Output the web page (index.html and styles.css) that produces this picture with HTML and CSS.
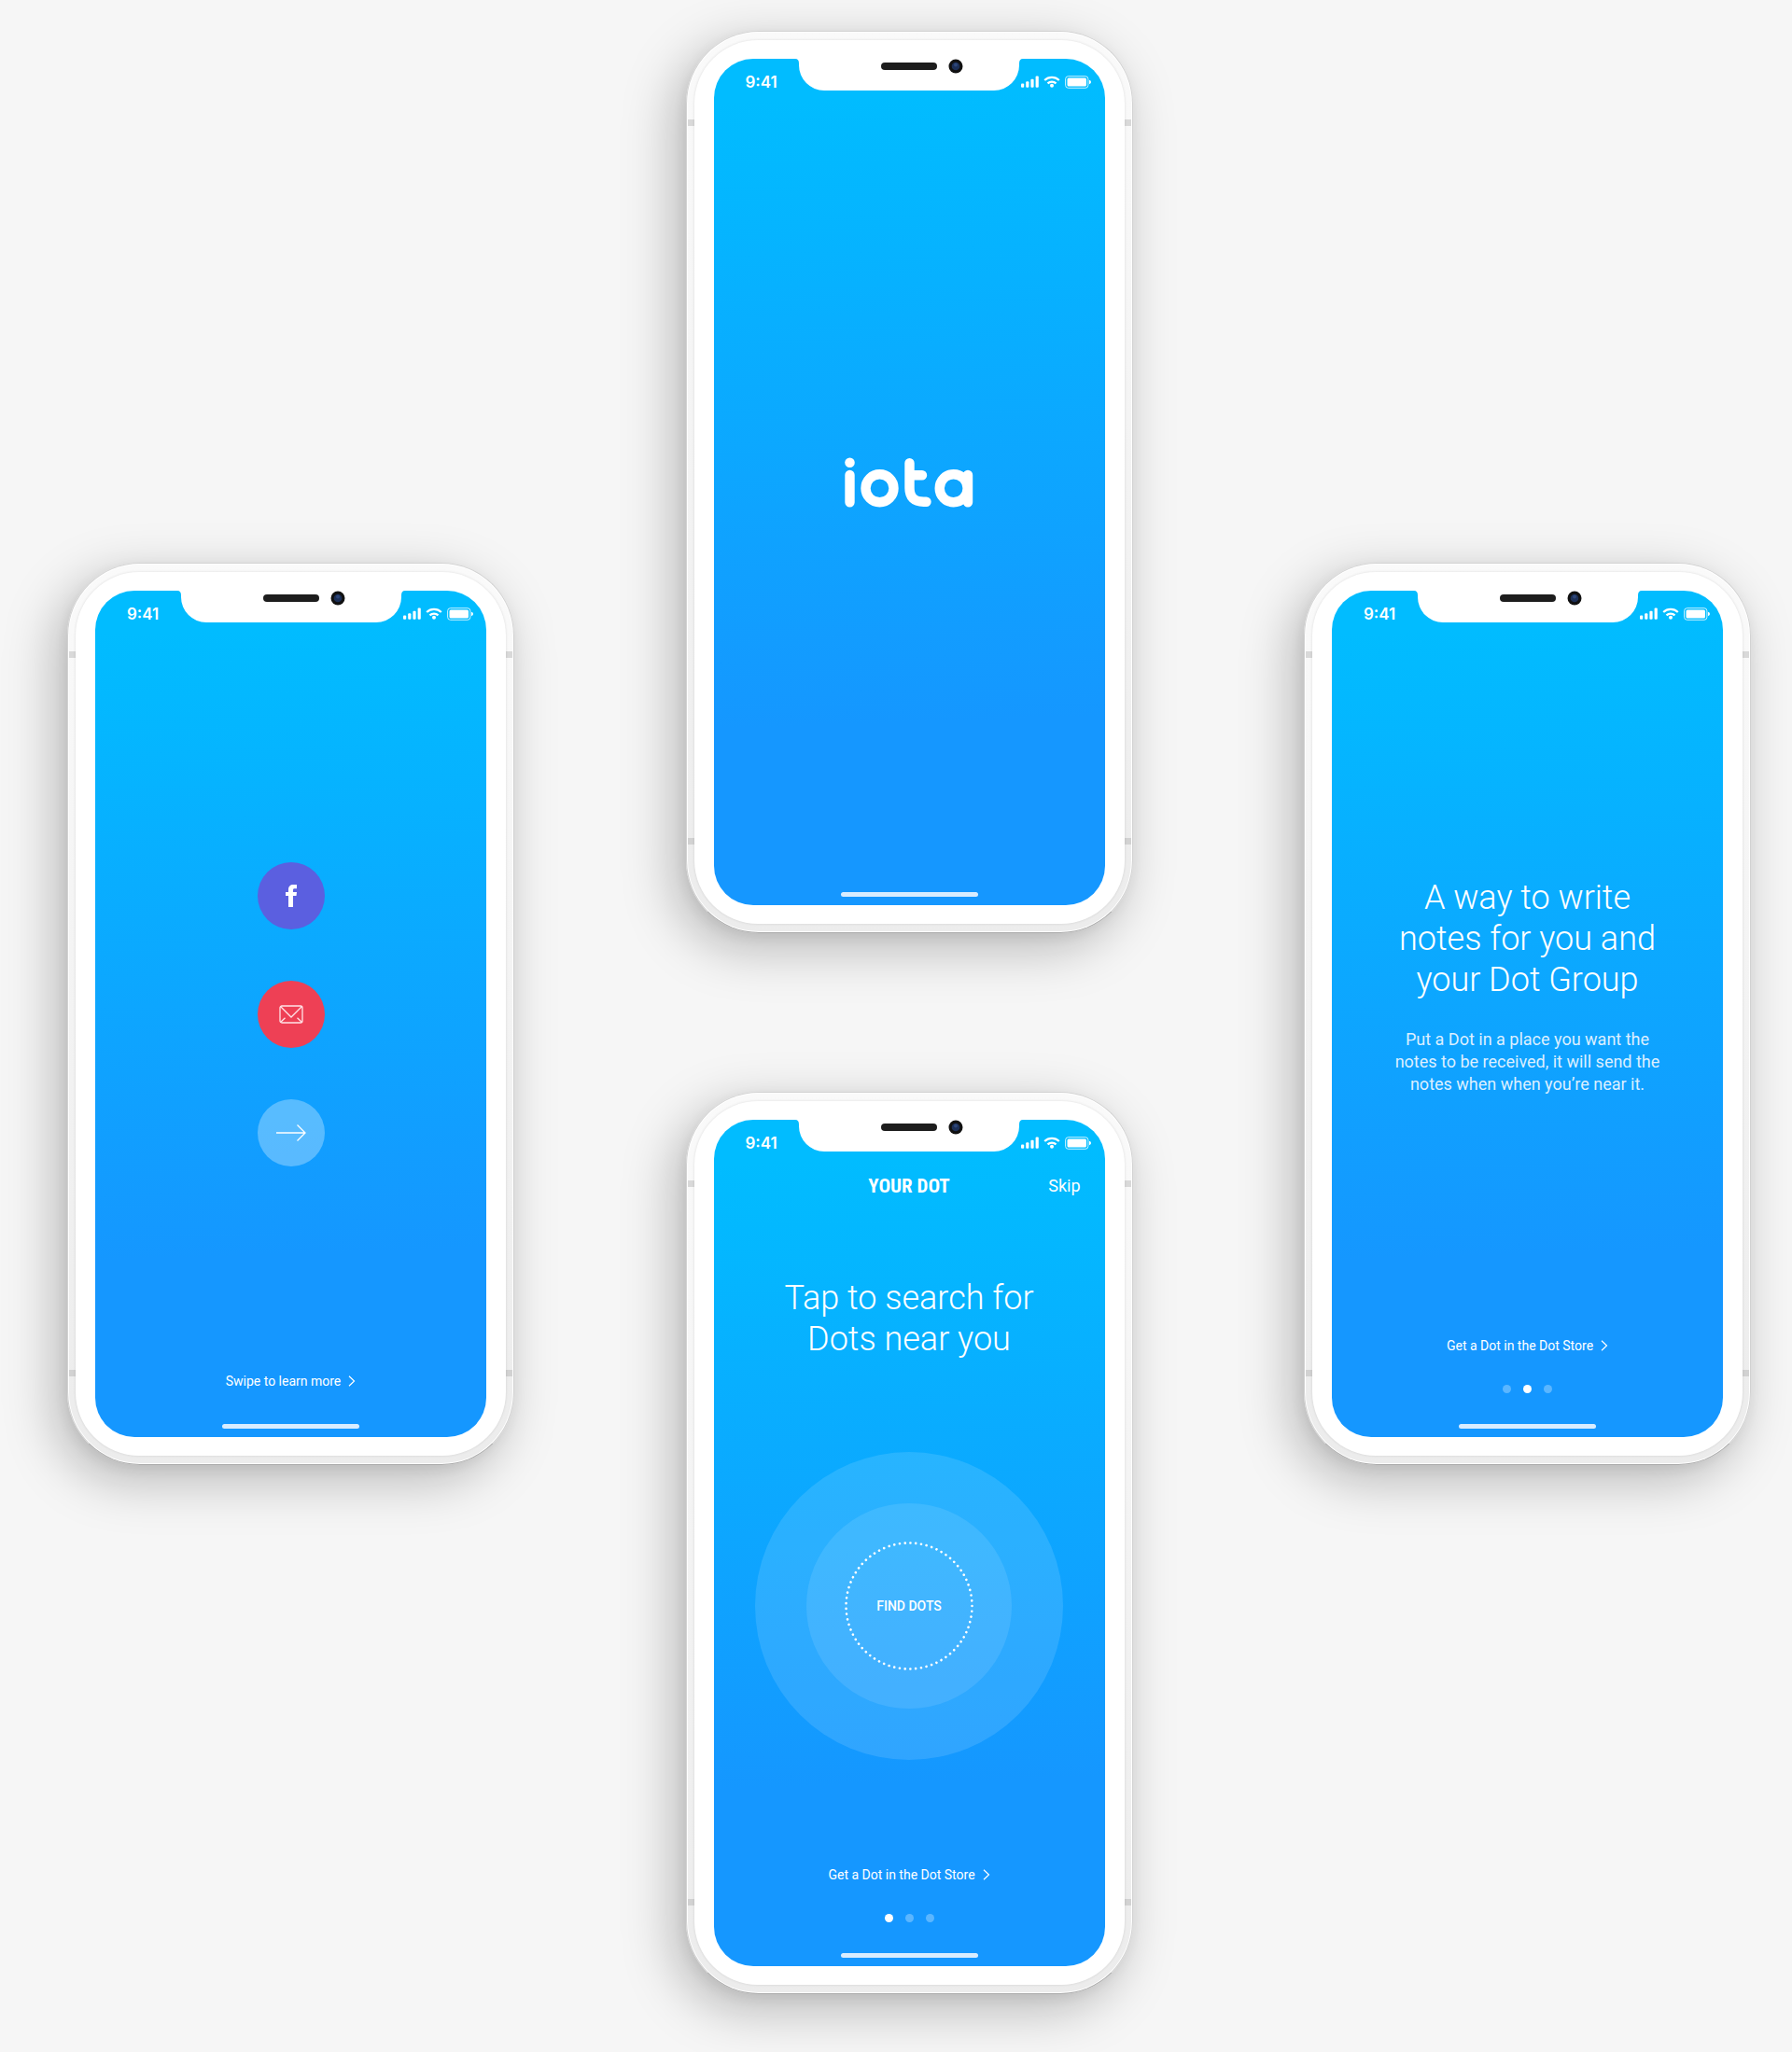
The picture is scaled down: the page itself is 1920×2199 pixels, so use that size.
FILE: index.html
```html
<!DOCTYPE html>
<html lang="en">
<head>
<meta charset="utf-8">
<meta name="viewport" content="width=device-width, initial-scale=1">
<title>iota – onboarding</title>
<link rel="stylesheet" href="styles.css">
</head>
<body>
<svg class="sprite" aria-hidden="true">
  <symbol id="notch" viewBox="0 0 244 34">
    <path fill="#fff" d="M0 0Q4 0 4 5V7A27 27 0 0 0 31 34H213A27 27 0 0 0 240 7V5Q240 0 244 0Z"/>
    <rect x="92" y="4" width="60" height="8" rx="4" fill="#1d1d1d"/>
    <circle cx="172" cy="8" r="7.5" fill="#111"/>
    <circle cx="172" cy="8" r="4.3" fill="#1c2f57"/>
    <circle cx="172" cy="6.5" r="2" fill="#2d4679"/>
  </symbol>
  <symbol id="signals" viewBox="0 0 75 14">
    <g fill="#fff">
      <rect x="0" y="8.5" width="3.2" height="4.3" rx="1"/>
      <rect x="5.2" y="6.3" width="3.2" height="6.5" rx="1"/>
      <rect x="10.4" y="3.8" width="3.2" height="9" rx="1"/>
      <rect x="15.6" y="0.6" width="3.2" height="12.2" rx="1"/>
      <circle cx="33" cy="10.8" r="2"/>
      <rect x="49.5" y="2.5" width="20.5" height="9" rx="1.5"/>
      <path d="M73 4.8q2 .6 2 2.2t-2 2.2z"/>
    </g>
    <g fill="none" stroke="#fff">
      <path stroke-width="2.2" d="M25.2 5a11.2 11.2 0 0 1 15.6 0M28.5 8.4a6.4 6.4 0 0 1 9 0"/>
      <rect x="47.6" y="0.7" width="24.3" height="12.6" rx="3" stroke-width="1" opacity=".8"/>
    </g>
  </symbol>
  <symbol id="chevron" viewBox="0 0 8 12">
    <path d="M1 .8 6.5 6 1 11.2" fill="none" stroke="#fff" stroke-width="1.2"/>
  </symbol>
</svg>

<main class="board">
  <section class="phone" aria-label="Sign in">
    <div class="bezel"><div class="screen">
      <div class="status"><span class="time">9:41</span><svg class="notch"><use href="#notch"/></svg><svg class="signals"><use href="#signals"/></svg></div>
      <div class="login">
        <button class="round facebook" aria-label="Continue with Facebook">
          <svg width="12" height="24" viewBox="0 0 12 24"><path fill="#fff" d="M3 24V12H0V8h3V5.4C3 1.900 5 0 8.200 0H12v4.200H9.700C8.400 4.200 8 4.800 8 5.900V8h4l-.5 4H8v12z"/></svg>
        </button>
        <button class="round mail" aria-label="Continue with email">
          <svg width="26" height="20" viewBox="0 0 26 20" fill="none" stroke="#ffe3e7" stroke-width="1.300"><rect x="1" y="1" width="24" height="18" rx="2"/><path d="M1.500 1.500 13 13 24.500 1.500M1.500 18.500l5-4.800M24.500 18.500l-5-4.800"/></svg>
        </button>
        <button class="round next" aria-label="Continue">
          <svg width="32" height="18" viewBox="0 0 32 18" fill="none" stroke="#fff" stroke-width="1.300"><path d="M0 9h31M22.500.5 31 9l-8.500 8.500"/></svg>
        </button>
      </div>
      <div class="foot">
        <a class="more" href="#intro">Swipe to learn more<svg class="chevron"><use href="#chevron"/></svg></a>
      </div>
      <div class="home"></div>
    </div></div>
  </section>

  <div class="middle">
    <section class="phone" aria-label="Welcome">
      <div class="bezel"><div class="screen">
        <div class="status"><span class="time">9:41</span><svg class="notch"><use href="#notch"/></svg><svg class="signals"><use href="#signals"/></svg></div>
        <svg class="logo" viewBox="0 0 138 54" role="img" aria-label="iota" fill="none" stroke="#fff" stroke-width="10.400" stroke-linecap="round">
          <circle cx="5.500" cy="5.700" r="5.300" fill="#fff" stroke="none"/>
          <path d="M5.500 19v29.200M69.500 6.200V33Q69.500 47.700 84.500 47.700H87.500M69.500 19.200H83M132 19v29.200"/>
          <circle cx="37.500" cy="33.200" r="15"/>
          <circle cx="116.700" cy="33.200" r="15"/>
        </svg>
        <div class="home"></div>
      </div></div>
    </section>

    <section class="phone" aria-label="Your Dot">
      <div class="bezel"><div class="screen">
        <div class="status"><span class="time">9:41</span><svg class="notch"><use href="#notch"/></svg><svg class="signals"><use href="#signals"/></svg></div>
        <header class="bar"><h2 class="title">YOUR DOT</h2><a class="skip" href="#skip">Skip</a></header>
        <h1 class="headline search">Tap to search for<br>Dots near you</h1>
        <div class="halo">
          <button class="find">
            <svg class="dotted" viewBox="0 0 138 138" aria-hidden="true"><circle cx="69" cy="69" r="67.500" pathLength="73" fill="none" stroke="#fff" stroke-width="2.600" stroke-linecap="round" stroke-dasharray="0.010 0.990"/></svg>
            <span>FIND DOTS</span>
          </button>
        </div>
        <div class="foot">
          <a class="more" href="#store">Get a Dot in the Dot Store<svg class="chevron"><use href="#chevron"/></svg></a>
          <div class="pager"><i class="dot on"></i><i class="dot"></i><i class="dot"></i></div>
        </div>
        <div class="home"></div>
      </div></div>
    </section>
  </div>

  <section class="phone" id="intro" aria-label="Introduction">
    <div class="bezel"><div class="screen">
      <div class="status"><span class="time">9:41</span><svg class="notch"><use href="#notch"/></svg><svg class="signals"><use href="#signals"/></svg></div>
      <h1 class="headline intro">A way to write<br>notes for you and<br>your Dot Group</h1>
      <p class="copy">Put a Dot in a place you want the<br>notes to be received, it will send the<br>notes when when you’re near it.</p>
      <div class="foot">
        <a class="more" href="#store">Get a Dot in the Dot Store<svg class="chevron"><use href="#chevron"/></svg></a>
        <div class="pager"><i class="dot"></i><i class="dot on"></i><i class="dot"></i></div>
      </div>
      <div class="home"></div>
    </div></div>
  </section>
</main>
</body>
</html>
```
FILE: styles.css
```css
* { box-sizing: border-box; }

body {
  margin: 0;
  background: #f6f6f6;
  color: #fff;
  font-family: Roboto, "Liberation Sans", sans-serif;
}

h1, h2, p { margin: 0; }
a { color: inherit; text-decoration: none; }
button { border: 0; padding: 0; color: inherit; font: inherit; cursor: pointer; }
svg { display: block; }
.sprite { position: absolute; width: 0; height: 0; }

.board {
  display: flex;
  justify-content: space-between;
  align-items: center;
  padding: 33px 44px 62px 72px;
}
.board > .phone { margin-top: 3px; }

.middle { display: flex; flex-direction: column; gap: 170px; }

/* Device shell: side antenna bands are painted as background stripes */
.phone {
  width: 479px;
  padding: 9px 8px;
  border: 1px solid #d2d2d2;
  border-bottom-color: #aaa;
  border-radius: 78px;
  background:
    linear-gradient(#d9d9d9, #d9d9d9) 0 94px / 100% 7px no-repeat,
    linear-gradient(#d2d2d2, #d2d2d2) 0 864px / 100% 7px no-repeat,
    linear-gradient(#fafafa, #ececec);
  box-shadow:
    inset 0 0 0 1px #fff,
    -12px 16px 56px rgba(0, 0, 0, .26),
    -2px 4px 14px rgba(0, 0, 0, .06);
}

.bezel {
  padding: 20px 21px;
  border-radius: 68px;
  background: #fff;
  box-shadow: 0 0 3px rgba(0, 0, 0, .12);
}

.screen {
  display: flex;
  flex-direction: column;
  min-height: 907px;
  padding-bottom: 9px;
  border-radius: 42px;
  overflow: hidden;
  background: linear-gradient(178deg, #01bcff 5%, #1597ff 78%);
}

.status { display: grid; grid-template-columns: 1fr 244px 1fr; height: 34px; }
.time {
  padding-top: 15px;
  padding-left: 34px;
  font: 600 17px/20px Inter, Roboto, sans-serif;
}
.notch { width: 244px; height: 34px; }
.signals { width: 75px; height: 14px; margin-top: 18px; margin-left: -2px; }

.logo { width: 138px; height: 54px; margin: 393px auto 0; }

.login { display: flex; flex-direction: column; align-items: center; gap: 55px; padding-top: 257px; }
.round {
  display: flex;
  align-items: center;
  justify-content: center;
  width: 72px;
  height: 72px;
  border-radius: 50%;
}
.facebook { background: #5b5fe0; }
.mail { background: #ee4055; }
.next { background: rgba(255, 255, 255, .3); }

.bar {
  display: grid;
  grid-template-columns: 1fr auto 1fr;
  padding: 25px 26px 0;
  font-size: 18px;
  line-height: 24px;
}
.title { grid-column: 2; font: 700 21px/24px "Roboto Condensed", Roboto, sans-serif; }
.skip { justify-self: end; }

.headline { font-size: 36px; font-weight: 300; line-height: 44px; text-align: center; }
.search { padding-top: 86px; }
.intro { padding-top: 273px; }
.copy { padding-top: 30px; color: #dcefff; font-size: 18px; line-height: 24px; text-align: center; }

.halo {
  display: flex;
  align-items: center;
  justify-content: center;
  width: 330px;
  height: 330px;
  margin: 99px auto 0;
  border-radius: 50%;
  background: rgba(255, 255, 255, .12);
}
.find {
  display: grid;
  place-items: center;
  width: 220px;
  height: 220px;
  border-radius: 50%;
  background: rgba(255, 255, 255, .1);
  font-size: 14px;
  font-weight: 500;
}
.find > * { grid-area: 1 / 1; }
.dotted { width: 138px; height: 138px; }

.foot { display: flex; flex-direction: column; align-items: center; gap: 34px; margin-top: auto; }
.more { display: flex; align-items: center; gap: 8px; font-size: 14px; line-height: 16px; }
.login + .foot { padding-bottom: 5px; }
.chevron { width: 8px; height: 12px; }
.pager { display: flex; gap: 13px; }
.dot { width: 9px; height: 9px; border-radius: 50%; background: rgba(255, 255, 255, .3); }
.dot.on { background: #fff; }

.home {
  width: 147px;
  height: 5px;
  margin: 33px auto 0;
  border-radius: 3px;
  background: #d8ecff;
}
.logo + .home { margin-top: auto; }
```
